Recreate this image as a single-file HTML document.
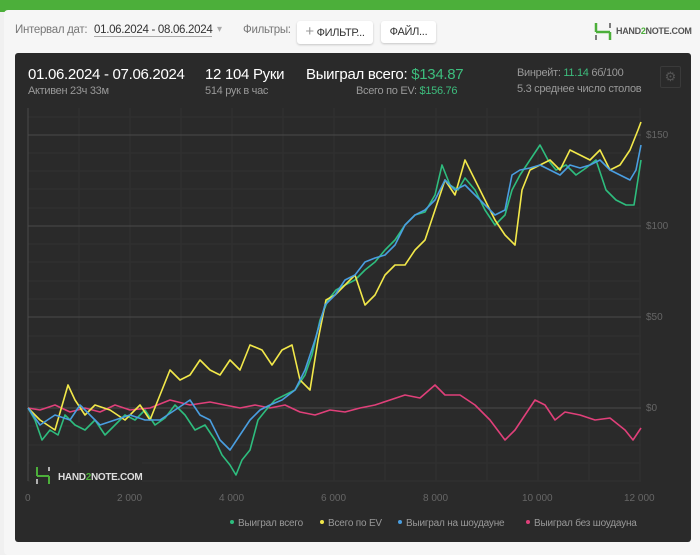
<!DOCTYPE html><html><head><meta charset="utf-8"><style>
body{margin:0;width:700px;height:549px;background:#f0f0f0;font-family:"Liberation Sans",sans-serif;position:relative;overflow:hidden}
.top{position:absolute;left:0;top:0;width:700px;height:12px;background:#4caf3a}
.card{position:absolute;left:4px;top:10px;width:700px;height:545px;background:#f6f6f6;border-radius:4px}
.t{position:absolute;white-space:nowrap;letter-spacing:-0.3px}
.btn{position:absolute;background:#fff;border-radius:3px;box-shadow:0 1px 2px rgba(0,0,0,.2);font-size:11px;color:#333;line-height:22px;text-align:center;letter-spacing:-0.3px}
.panel{position:absolute;left:15px;top:53px;width:676px;height:489px;background:#2a2a2a;border-radius:3px}
</style></head><body>
<div class="top"></div><div class="card"></div>
<div class="t" style="left:15px;top:24px;font-size:11.5px;color:#777">Интервал дат:</div>
<div class="t" style="left:94px;top:24px;font-size:11.5px;color:#333;border-bottom:1px solid #aaa">01.06.2024 - 08.06.2024</div>
<div class="t" style="left:217px;top:24px;font-size:10px;color:#aaa">▾</div>
<div class="t" style="left:243px;top:24px;font-size:11.5px;color:#777">Фильтры:</div>
<div class="btn" style="left:297px;top:21px;width:76px"><span style="color:#999;font-size:15px">+</span> ФИЛЬТР...</div>
<div class="btn" style="left:381px;top:21px;width:55px">ФАЙЛ...</div>
<svg style="position:absolute;left:594px;top:21px" width="18" height="20"><path d="M2 2v9M2 11h14M16 11v8" stroke="#4caf3a" stroke-width="2.5" fill="none"/><path d="M16 2v5M2 14v5" stroke="#555" stroke-width="1.5"/></svg>
<div class="t" style="left:616px;top:26px;font-size:9px;font-weight:bold;color:#555">HAND<span style="color:#4caf3a">2</span>NOTE.COM</div>
<div class="panel"></div>
<div class="t" style="left:28px;top:66px;font-size:15px;color:#fff">01.06.2024 - 07.06.2024</div>
<div class="t" style="left:28px;top:85px;font-size:11px;color:#999">Активен 23ч 33м</div>
<div class="t" style="left:205px;top:66px;font-size:15px;color:#fff">12 104 Руки</div>
<div class="t" style="left:205px;top:85px;font-size:11px;color:#999">514 рук в час</div>
<div class="t" style="left:306px;top:66px;font-size:15px;color:#fff">Выиграл всего: <span style="color:#3dbd7d">$134.87</span></div>
<div class="t" style="left:356px;top:85px;font-size:11px;color:#999">Всего по EV: <span style="color:#3dbd7d">$156.76</span></div>
<div class="t" style="left:517px;top:67px;font-size:11px;color:#999">Винрейт: <span style="color:#3dbd7d">11.14</span> 6б/100</div>
<div class="t" style="left:517px;top:83px;font-size:11px;color:#999">5.3 среднее число столов</div>
<div style="position:absolute;left:660px;top:66px;width:19px;height:20px;border:1px solid #3a3a3a;border-radius:2px;color:#555;font-size:13px;text-align:center;line-height:20px">⚙</div>
<svg style="position:absolute;left:0;top:0" width="700" height="549">
<g stroke="#313131" stroke-width="1">
<path d="M28 117H641M28 153H641M28 171H641M28 189H641M28 208H641M28 244H641M28 262H641M28 281H641M28 299H641M28 336H641M28 354H641M28 372H641M28 390H641M28 426H641M28 445H641M28 463H641M28 481H641"/>
<path d="M79 108V481M130 108V481M181 108V481M232 108V481M283 108V481M334 108V481M385 108V481M436 108V481M487 108V481M538 108V481M589 108V481M640 108V481"/>
</g>
<g stroke="#4a4a4a"><path d="M28 135H641M28 226H641M28 317H641M28 408H641M28 108V481"/></g>
<g font-size="10" fill="#666" font-family="Liberation Sans">
<text x="646" y="138">$150</text><text x="646" y="229">$100</text><text x="646" y="320">$50</text><text x="646" y="411">$0</text>
<text x="25" y="501">0</text><text x="117" y="501">2 000</text><text x="219" y="501">4 000</text><text x="321" y="501">6 000</text><text x="423" y="501">8 000</text><text x="522" y="501">10 000</text><text x="624" y="501">12 000</text>
</g>
<g fill="none" stroke-width="1.6" stroke-linejoin="round">
<polyline stroke="#e0407a" points="28,408 40,410 55,405 70,412 85,408 100,412 115,405 130,410 150,408 170,400 190,405 210,402 225,405 240,408 255,405 270,408 285,405 300,412 315,415 330,410 345,412 360,408 375,405 390,400 405,395 420,398 435,385 445,395 460,395 475,405 490,420 505,440 515,430 525,415 535,400 545,405 555,420 565,412 580,415 595,420 610,418 625,430 633,440 641,428"/>
<polyline stroke="#2ebd7e" points="28,408 35,420 42,440 50,430 58,435 65,415 75,425 85,430 95,420 105,435 115,425 125,415 135,420 145,410 155,425 165,418 175,405 185,415 195,430 205,425 215,440 222,455 230,465 236,475 242,460 250,450 258,420 266,410 275,400 285,395 295,390 305,375 312,355 320,320 328,300 336,290 345,285 355,280 365,270 375,262 385,250 395,240 405,225 415,215 425,212 435,195 442,165 450,185 458,190 465,178 475,190 485,210 495,225 505,215 512,190 520,175 530,160 540,145 548,160 556,170 566,165 576,175 586,168 596,160 606,190 616,200 626,205 634,205 641,160"/>
<polyline stroke="#f2e84a" points="28,408 40,420 55,430 68,385 75,400 85,415 95,405 110,410 125,420 140,405 150,420 160,395 170,370 180,380 190,375 200,360 210,370 220,375 230,360 240,370 250,345 262,350 272,365 282,350 292,345 300,380 310,390 318,340 326,300 335,295 345,285 355,275 365,305 375,295 385,275 395,265 405,265 415,250 425,240 435,210 445,180 455,195 465,160 475,180 485,200 495,220 505,235 515,245 522,190 530,170 540,165 550,160 560,170 570,150 580,155 590,160 600,150 610,170 620,165 630,150 638,130 641,122"/>
<polyline stroke="#4a9ee0" points="28,408 40,425 55,415 70,420 80,405 90,415 100,425 115,420 130,415 145,420 160,420 175,410 190,400 200,415 210,420 220,440 230,450 240,435 250,420 260,410 270,405 282,400 295,390 305,370 315,340 325,305 335,295 345,280 355,275 365,262 375,258 385,255 395,245 405,225 415,215 425,210 435,200 445,180 455,190 465,185 475,195 485,205 495,215 505,210 512,175 520,170 530,168 540,165 550,170 560,175 570,165 580,168 590,165 600,160 610,170 620,175 630,180 636,170 641,145"/>
</g>
<rect x="30" y="462" width="112" height="22" fill="#2a2a2a" opacity=".85"/>
<path d="M37 467v9M37 476h12M49 476v8" stroke="#4caf3a" stroke-width="2" fill="none"/><path d="M49 467v4M37 479v5" stroke="#ddd" stroke-width="1.5"/>
<text x="58" y="480" font-size="10" font-weight="bold" fill="#ddd" font-family="Liberation Sans" letter-spacing="-0.3">HAND<tspan fill="#4caf3a">2</tspan>NOTE.COM</text>
<g font-size="10" fill="#999" font-family="Liberation Sans" letter-spacing="-0.2">
<circle cx="232" cy="522" r="2" fill="#2ebd7e"/><text x="238" y="526">Выиграл всего</text>
<circle cx="322" cy="522" r="2" fill="#f2e84a"/><text x="328" y="526">Всего по EV</text>
<circle cx="400" cy="522" r="2" fill="#4a9ee0"/><text x="406" y="526">Выиграл на шоудауне</text>
<circle cx="528" cy="522" r="2" fill="#e0407a"/><text x="534" y="526">Выиграл без шоудауна</text>
</g>
</svg>
</body></html>
